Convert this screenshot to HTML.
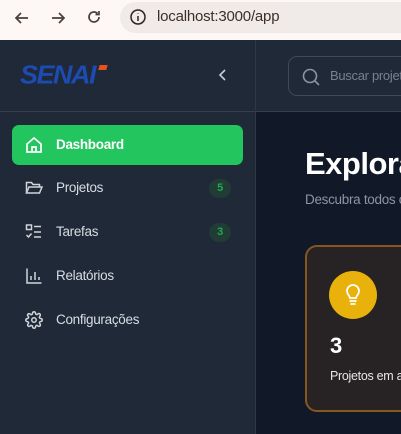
<!DOCTYPE html>
<html><head><meta charset="utf-8"><style>
*{margin:0;padding:0;box-sizing:border-box}
body{width:401px;height:434px;overflow:hidden;font-family:"Liberation Sans",sans-serif;background:#111827;position:relative;white-space:nowrap}
.bar{position:absolute;left:0;top:0;width:401px;height:40px;background:#fdf8f5}
.pill{position:absolute;left:120px;top:2px;width:300px;height:31px;border-radius:16px;background:#f0ebe8}
.url{position:absolute;left:157px;top:8px;font-size:15px;color:#3b2f2a;letter-spacing:-0.2px}
.side{position:absolute;left:0;top:40px;width:255px;height:394px;background:#1f2937}
.hdr{position:absolute;left:0;top:111px;width:401px;height:1px;background:#334050}
.mainhdr{position:absolute;left:256px;top:40px;width:145px;height:72px;background:#1f2937}
.logo{position:absolute;left:20px;top:60px;font-size:27px;font-weight:bold;font-style:italic;color:#1e4bb0;letter-spacing:-1.5px;transform:scaleY(0.95)}
.search{position:absolute;left:288px;top:56px;width:130px;height:40px;border:1px solid #3e4a5a;border-radius:9px}
.search span{position:absolute;left:41px;top:11px;font-size:13px;color:#77818f;letter-spacing:-0.3px}
.item{position:absolute;left:12px;width:231px;height:40px;border-radius:7px;color:#d8dde4;font-size:13.5px;letter-spacing:-0.3px}
.item span{position:absolute;left:44px;top:12px}
.item svg{position:absolute;left:13px;top:11px}
.act{background:#22c55e;color:#fff;font-weight:bold}
.badge{position:absolute;left:197px;top:11px;width:22px;height:19px;border-radius:10px;background:#213b35;color:#22a652;font-size:11px;font-weight:bold;text-align:center;line-height:19px}
h1{position:absolute;left:305px;top:146px;font-size:31px;color:#fff;font-weight:bold;letter-spacing:-0.5px}
.sub{position:absolute;left:305px;top:192px;font-size:13.5px;color:#8c96a3;letter-spacing:-0.3px}
.card{position:absolute;left:305px;top:245px;width:130px;height:167px;background:#272324;border:2px solid #86561d;border-radius:12px}
.circ{position:absolute;left:329px;top:271px;width:48px;height:48px;border-radius:50%;background:#e8b10b}
.num{position:absolute;left:330px;top:333px;font-size:22px;font-weight:bold;color:#fff}
.lbl{position:absolute;left:330px;top:369px;font-size:12.5px;color:#e5e7eb;letter-spacing:-0.3px}
</style></head><body>
<div class="bar"></div>
<div class="pill"></div>
<svg style="position:absolute;left:13px;top:9px" width="18" height="18" viewBox="0 0 18 18" fill="none" stroke="#4a3f3a" stroke-width="1.7"><path d="M15 9H3M8 4 3 9l5 5"/></svg>
<svg style="position:absolute;left:49px;top:9px" width="18" height="18" viewBox="0 0 18 18" fill="none" stroke="#4a3f3a" stroke-width="1.7"><path d="M3 9h12M10 4l5 5-5 5"/></svg>
<svg style="position:absolute;left:85px;top:8px" width="18" height="18" viewBox="0 0 18 18" fill="none" stroke="#4a3f3a" stroke-width="1.7"><path d="M14 9a5 5 0 1 1-1.5-3.6M14 3v3.5h-3.5"/></svg>
<svg style="position:absolute;left:129px;top:8px" width="18" height="18" viewBox="0 0 18 18" fill="none" stroke="#2a2320" stroke-width="1.5"><circle cx="9" cy="9" r="7"/><path d="M9 8v5M9 5.2v.6"/></svg>
<div class="url">localhost:3000/app</div>
<div class="side"></div>
<div class="mainhdr"></div>
<div class="hdr"></div>
<div style="position:absolute;left:255px;top:40px;width:1px;height:394px;background:#2e3846"></div>
<div class="logo">SENAI</div>
<div style="position:absolute;left:99px;top:65px;width:8px;height:5px;background:#e8501c;transform:skewX(-15deg)"></div>
<svg style="position:absolute;left:217px;top:68px" width="12" height="14" viewBox="0 0 12 14" fill="none" stroke="#c9ced6" stroke-width="1.6"><path d="M8 2 3 7l5 5"/></svg>
<div class="search"><svg style="position:absolute;left:12px;top:10px" width="20" height="20" viewBox="0 0 20 20" fill="none" stroke="#8a94a2" stroke-width="1.6"><circle cx="9" cy="9" r="6.5"/><path d="m14 14 4 4"/></svg><span>Buscar projetos</span></div>

<div class="item act" style="top:125px"><svg width="18" height="18" viewBox="0 0 18 18" fill="none" stroke="#fff" stroke-width="1.7"><path d="M2 8 9 2l7 6v8H2z"/><path d="M7 16v-5h4v5"/></svg><span>Dashboard</span></div>
<div class="item" style="top:168px"><svg width="18" height="18" viewBox="0 0 18 18" fill="none" stroke="#d1d5db" stroke-width="1.5"><path d="M1.5 14V3.5h5l1.5 2h6.5V8"/><path d="M1.5 14 4 8h13l-2.5 6z"/></svg><span>Projetos</span><div class="badge">5</div></div>
<div class="item" style="top:212px"><svg width="18" height="18" viewBox="0 0 18 18" fill="none" stroke="#d1d5db" stroke-width="1.5"><rect x="1.5" y="2" width="5" height="4.5"/><path d="M1.5 12l2 2 3-3.5M9 3.5h7M9 9h7M9 14h7"/></svg><span>Tarefas</span><div class="badge">3</div></div>
<div class="item" style="top:256px"><svg width="18" height="18" viewBox="0 0 18 18" fill="none" stroke="#d1d5db" stroke-width="1.5"><path d="M2 1.5V16h14.5M6 13V9M10 13V5M14 13v-3"/></svg><span>Relatórios</span></div>
<div class="item" style="top:300px"><svg width="18" height="18" viewBox="0 0 24 24" fill="none" stroke="#d1d5db" stroke-width="2"><circle cx="12" cy="12" r="3"/><path d="M19.4 15a1.7 1.7 0 0 0 .3 1.8l.1.1a2 2 0 1 1-2.8 2.8l-.1-.1a1.7 1.7 0 0 0-1.8-.3 1.7 1.7 0 0 0-1 1.5V21a2 2 0 1 1-4 0v-.1a1.7 1.7 0 0 0-1.1-1.5 1.7 1.7 0 0 0-1.8.3l-.1.1a2 2 0 1 1-2.8-2.800l.1-.1a1.7 1.7 0 0 0 .3-1.8 1.7 1.7 0 0 0-1.5-1H3a2 2 0 1 1 0-4h.1a1.7 1.7 0 0 0 1.5-1.100 1.7 1.7 0 0 0-.3-1.8l-.1-.1a2 2 0 1 1 2.8-2.8l.1.1a1.7 1.7 0 0 0 1.8.3H9a1.7 1.7 0 0 0 1-1.5V3a2 2 0 1 1 4 0v.1a1.7 1.7 0 0 0 1 1.5 1.7 1.7 0 0 0 1.8-.3l.1-.1a2 2 0 1 1 2.8 2.8l-.1.1a1.7 1.7 0 0 0-.3 1.8V9a1.7 1.7 0 0 0 1.5 1H21a2 2 0 1 1 0 4h-.1a1.7 1.7 0 0 0-1.5 1z"/></svg><span>Configurações</span></div>

<h1>Explorar</h1>
<div class="sub">Descubra todos os projetos</div>
<div class="card"></div>
<div class="circ"><svg style="position:absolute;left:14px;top:12px" width="20" height="24" viewBox="0 0 20 24" fill="none" stroke="#fff" stroke-width="1.8"><path d="M7 15c0-2-3-3.5-3-7a6 6 0 0 1 12 0c0 3.5-3 5-3 7z"/><path d="M6.5 18h7M7.5 21h5"/></svg></div>
<div class="num">3</div>
<div class="lbl">Projetos em andamento</div>
</body></html>
